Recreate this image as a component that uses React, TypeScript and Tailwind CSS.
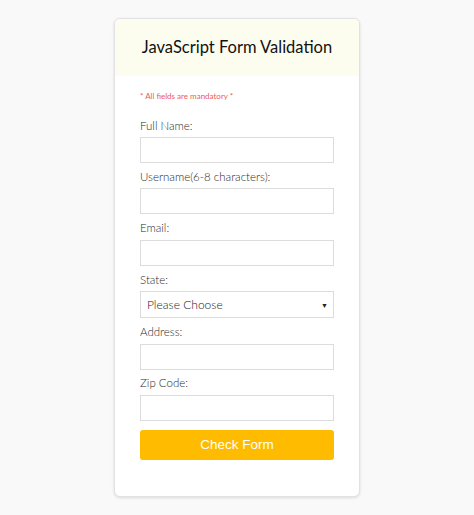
import React from "react";

const fields = [
  { label: "Full Name:" },
  { label: "Username(6-8 characters):" },
  { label: "Email:" },
  { label: "State:", select: true },
  { label: "Address:" },
  { label: "Zip Code:" },
];

export default function App() {
  return (
    <div className="min-h-[515px] w-full bg-[#f9f9f9] flex justify-center pt-[18px]" style={{ fontFamily: "Lato, 'Open Sans', sans-serif" }}>
      <div className="w-[246px] h-[479px] bg-white rounded-[6px] border border-[#e2e2e2] shadow-[0_1px_3px_rgba(0,0,0,0.12)] overflow-hidden flex flex-col">
        <div className="h-[57px] bg-[#fdfdef] flex items-center justify-center">
          <h1 className="text-[16.5px] text-[#111] font-normal">JavaScript Form Validation</h1>
        </div>
        <div className="px-[25px] pt-[15px]">
          <p className="text-[8px] leading-[10px] text-[#ef5a5a] mb-[16.5px]">* All fields are mandatory *</p>
          {fields.map((f) => (
            <div key={f.label} className="mb-[5.8px]">
              <div className="text-[11.5px] leading-[15px] text-[#2a2a2a] font-light mb-[4.6px]">{f.label}</div>
              {f.select ? (
                <div className="h-[27px] border border-[#dcdcdc] flex items-center justify-between pl-[6px] pr-[5px]">
                  <span className="text-[12px] text-[#222] font-light">Please Choose</span>
                  <span className="text-[7px] text-[#222]">▼</span>
                </div>
              ) : (
                <div className="h-[26px] border border-[#dcdcdc] bg-white" />
              )}
            </div>
          ))}
          <button className="mt-[9px] w-full h-[30px] rounded-[3px] bg-[#ffbb00] text-white text-[13.5px] flex items-center justify-center" style={{ fontFamily: "'Liberation Sans', Arial, sans-serif" }}>
            Check Form
          </button>
        </div>
      </div>
    </div>
  );
}
